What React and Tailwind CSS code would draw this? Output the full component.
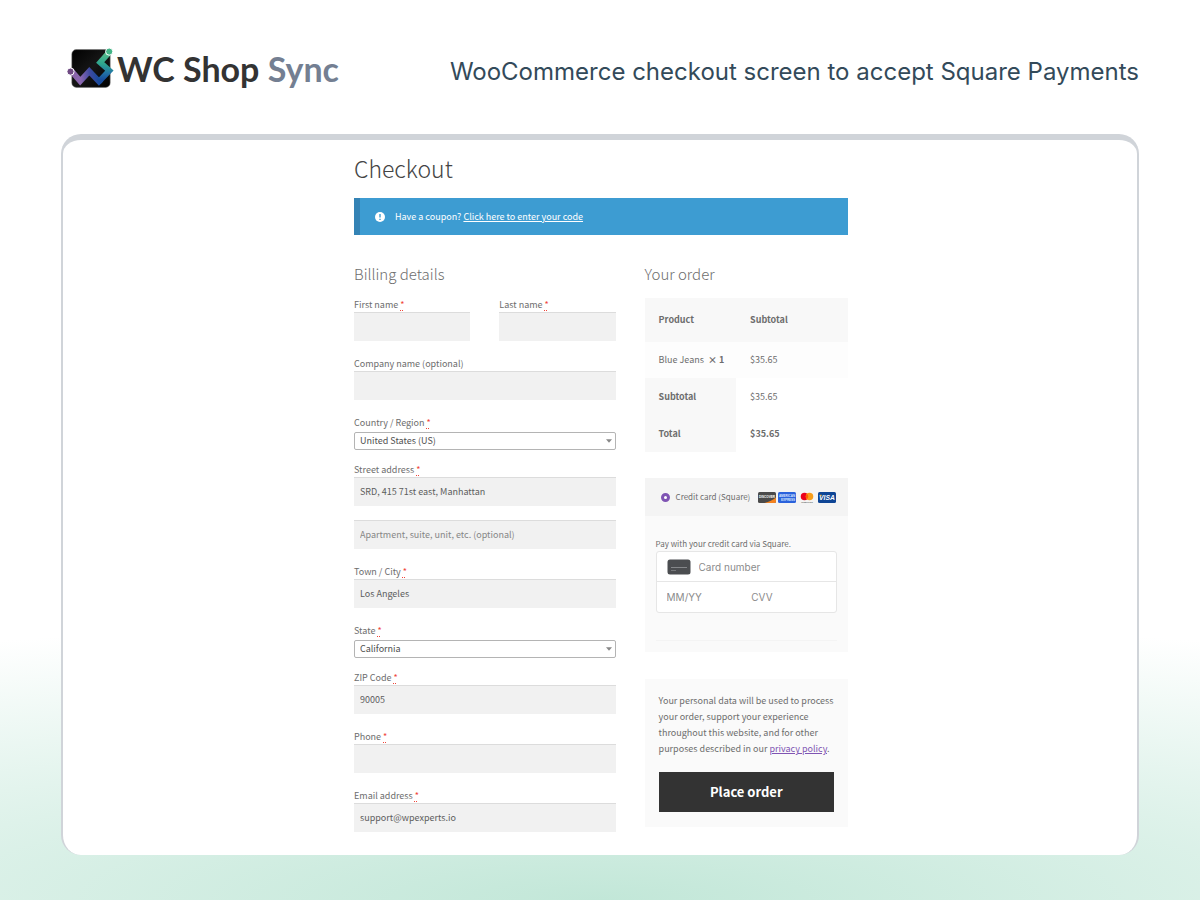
import React from "react";

const inputStyle =
  "block h-[29px] w-full min-w-0 border-t border-[#dcdcdc] bg-[#f1f1f1] px-1.5 pb-0.5 text-[#5d5d5d] outline-none placeholder:text-[#868686]";

function Label({ htmlFor, required, children }) {
  return (
    <label htmlFor={htmlFor} className="block h-4 leading-[17px] whitespace-nowrap">
      {children}
      {required && (
        <abbr
          title="required"
          className="ml-0.5 text-[#f0453a] underline decoration-dotted underline-offset-2"
        >
          *
        </abbr>
      )}
    </label>
  );
}

function Field({ id, label, required, value, type = "text" }) {
  return (
    <div>
      <Label htmlFor={id} required={required}>
        {label}
      </Label>
      <input id={id} type={type} defaultValue={value} className={inputStyle} />
    </div>
  );
}

function SelectField({ id, label, value }) {
  return (
    <div className="-mb-[3px]">
      <Label htmlFor={id} required>
        {label}
      </Label>
      <div className="relative mt-0.5">
        <select
          id={id}
          defaultValue={value}
          className="block h-[18px] w-full appearance-none rounded-[2px] border border-[#b4b4b4] bg-white px-[5px] text-[#4f4f4f] outline-none"
        >
          <option>{value}</option>
        </select>
        <svg
          viewBox="0 0 6 4"
          className="pointer-events-none absolute top-[7px] right-1 h-1 w-1.5"
          aria-hidden="true"
        >
          <path d="M0 .3h6L3 3.7z" fill="#888" />
        </svg>
      </div>
    </div>
  );
}

function LogoMark() {
  return (
    <svg viewBox="0 0 48 44" className="h-11 w-12 shrink-0" aria-hidden="true">
      <defs>
        <linearGradient id="box" x1="0" y1="0" x2="1" y2="1">
          <stop offset="0" stopColor="#000" />
          <stop offset="0.5" stopColor="#161616" />
          <stop offset="1" stopColor="#000" />
        </linearGradient>
        <linearGradient id="wave" gradientUnits="userSpaceOnUse" x1="3" y1="30" x2="43" y2="24">
          <stop offset="0" stopColor="#8a62a5" />
          <stop offset="0.25" stopColor="#8b68b0" />
          <stop offset="0.5" stopColor="#3e4aa0" />
          <stop offset="0.7" stopColor="#174a9c" />
          <stop offset="1" stopColor="#2277a8" />
        </linearGradient>
        <linearGradient id="rise" gradientUnits="userSpaceOnUse" x1="38" y1="5" x2="36" y2="34">
          <stop offset="0" stopColor="#5fc08a" />
          <stop offset="0.45" stopColor="#2da58e" />
          <stop offset="0.75" stopColor="#2273a6" />
          <stop offset="1" stopColor="#174a9c" />
        </linearGradient>
      </defs>
      <rect x="4.8" y="3.6" width="38.4" height="37.8" rx="4.5" fill="url(#box)" stroke="#777" strokeWidth=".5" />
      <path d="M4 24.5L13.2 35.2L22.3 25.3L32 35.5L34 33.5" fill="none" stroke="url(#wave)" strokeWidth="5.8" />
      <path d="M31.5 36L42.4 24.6L33.2 16.4L42.5 6" fill="none" stroke="url(#rise)" strokeWidth="5.8" />
      <circle cx="3.5" cy="25.6" r="3.6" fill="#6f4a83" stroke="#fff" strokeWidth="1" />
      <circle cx="42.2" cy="5.6" r="3.6" fill="#43b487" stroke="#fff" strokeWidth="1" />
    </svg>
  );
}

function Discover() {
  return (
    <svg viewBox="0 0 36 22" className="h-[11px] w-[18px]" role="img" aria-label="Discover">
      <rect width="36" height="22" rx="3" fill="#4a4a4a" />
      <path d="M36 11v8a3 3 0 0 1-3 3H13C22 20 30 16 36 11z" fill="#f58220" />
      <text x="18" y="12" textAnchor="middle" fontFamily="Liberation Sans" fontWeight="700" fontSize="6.2" fill="#fff">
        DISCOVER
      </text>
    </svg>
  );
}

function Amex() {
  return (
    <svg viewBox="0 0 36 22" className="h-[11px] w-[18px]" role="img" aria-label="American Express">
      <rect width="36" height="22" rx="3" fill="#2a62dc" />
      <g fontFamily="Liberation Sans" fontWeight="700" fill="#dbe7ff" textAnchor="middle">
        <text x="18" y="9.5" fontSize="6">AMERICAN</text>
        <text x="20" y="18" fontSize="6">EXPRESS</text>
      </g>
    </svg>
  );
}

function Mastercard() {
  return (
    <svg viewBox="0 0 36 22" className="h-[11px] w-[18px]" role="img" aria-label="Mastercard">
      <circle cx="13" cy="9" r="7.5" fill="#eb001b" />
      <circle cx="23" cy="9" r="7.5" fill="#f79e1b" />
      <path d="M18 3.4a7.5 7.5 0 0 1 0 11.2a7.5 7.5 0 0 1 0-11.2z" fill="#ff5f00" />
      <text x="18" y="21.4" textAnchor="middle" fontFamily="Liberation Sans" fontSize="4.6" fill="#333">
        mastercard
      </text>
    </svg>
  );
}

function Visa() {
  return (
    <svg viewBox="0 0 36 22" className="h-[11px] w-[18px]" role="img" aria-label="Visa">
      <rect width="36" height="22" rx="3" fill="#0e4595" />
      <text x="18" y="16" textAnchor="middle" fontFamily="Liberation Sans" fontWeight="700" fontStyle="italic" fontSize="13.5" fill="#fff">
        VISA
      </text>
      <path d="M3 5.5h4l2 5c-1-2-3-4-6-5z" fill="#f2ae14" />
    </svg>
  );
}

function OrderTable() {
  return (
    <table className="w-full table-fixed border-collapse text-left">
      <thead>
        <tr className="h-11 bg-[#f8f8f8]">
          <th scope="col" className="w-[45%] pl-3.5 font-bold">Product</th>
          <th scope="col" className="pl-3.5 font-bold">Subtotal</th>
        </tr>
      </thead>
      <tbody>
        <tr className="h-9 bg-[#fdfdfd]">
          <td className="pl-3.5 whitespace-nowrap">
            Blue Jeans&nbsp; <strong className="font-bold">×&nbsp;1</strong>
          </td>
          <td className="pl-3.5">$35.65</td>
        </tr>
      </tbody>
      <tfoot>
        <tr className="h-[37px]">
          <th scope="row" className="bg-[#f8f8f8] pl-3.5 font-bold">Subtotal</th>
          <td className="pl-3.5">$35.65</td>
        </tr>
        <tr className="h-[37px]">
          <th scope="row" className="bg-[#f8f8f8] pl-3.5 font-bold">Total</th>
          <td className="pl-3.5 font-bold">$35.65</td>
        </tr>
      </tfoot>
    </table>
  );
}

function Payment() {
  return (
    <section className="mt-[26px] h-[174px] bg-[#fafafa]">
      <div className="flex h-[38px] items-center bg-[#f4f4f4] pr-3 pl-4">
        <input
          id="square"
          type="radio"
          name="method"
          defaultChecked
          className="size-[9px] shrink-0 appearance-none rounded-full border-[3px] border-[#7f54b3] bg-white"
        />
        <label htmlFor="square" className="ml-1.5 text-[8px] whitespace-nowrap">
          Credit card (Square)
        </label>
        <span className="ml-auto flex gap-0.5">
          <Discover />
          <Amex />
          <Mastercard />
          <Visa />
        </span>
      </div>
      <div className="mx-[11px] mt-3 h-[113px] border-b border-[#f4f4f4] pt-2 text-[8px]">
        <p className="h-[15px] leading-[15px] whitespace-nowrap">Pay with your credit card via Square.</p>
        <div className="rounded-[3px] border border-[#e6e6e6] bg-white font-['Inter',sans-serif] text-[10px]">
          <div className="flex h-[30px] items-center border-b border-[#e6e6e6] pl-2.5">
            <svg viewBox="0 0 24 16" className="h-4 w-6 shrink-0" aria-hidden="true">
              <rect x=".5" y=".5" width="23" height="15" rx="2.5" fill="#4b4d50" />
              <path d="M4 8.5h16" stroke="#85878a" strokeWidth="1" />
              <path d="M4 11.5h5" stroke="#76787b" strokeWidth="1" />
            </svg>
            <input
              aria-label="Card number"
              placeholder="Card number"
              className="ml-2 h-6 w-full min-w-0 outline-none placeholder:text-[#8b8b8b]"
            />
          </div>
          <div className="flex h-[30px] items-center pl-2.5">
            <input
              aria-label="Expiration date"
              placeholder="MM/YY"
              className="h-6 w-1/2 min-w-0 outline-none placeholder:text-[#8b8b8b]"
            />
            <input
              aria-label="CVV"
              placeholder="CVV"
              className="h-6 w-1/2 min-w-0 outline-none placeholder:text-[#8b8b8b]"
            />
          </div>
        </div>
      </div>
    </section>
  );
}

export default function App() {
  return (
    <div className="flex min-h-screen flex-col bg-white bg-[radial-gradient(ellipse_133%_280px_at_50%_100%,#c2e7d8,#ffffff)] px-[61px] pb-[45px] font-['Noto_Sans_CJK_SC',sans-serif] text-[9px] text-[#6d6d6d]">
      <header className="flex h-[134px] items-center justify-between pt-0.5 pl-1.5">
        <div className="flex items-center gap-0.5 font-['Lato',sans-serif] text-[34px] font-bold whitespace-nowrap text-[#333]">
          <LogoMark />
          <span>
            WC Shop <span className="text-[#747f92]">Sync</span>
          </span>
        </div>
        <p className="pt-2 font-['Inter',sans-serif] text-2xl whitespace-nowrap text-[#334a5a]">
          WooCommerce checkout screen to accept Square Payments
        </p>
      </header>

      <main className="flex-1 rounded-[20px] border-x-2 border-t-[6px] border-[#d0d4d9] bg-white pb-[22px] pl-0.5">
        <div className="mx-auto max-w-[494px] pt-2.5">
          <h1 className="h-9 text-[23px] leading-9 font-light text-[#444]">Checkout</h1>
          <div className="mt-3 flex h-[37px] items-center border-l-[6px] border-[#3483b5] bg-[#3d9cd2] pl-[15px] text-white">
            <svg viewBox="0 0 10 10" className="size-2.5" aria-hidden="true">
              <circle cx="5" cy="5" r="5" fill="#fff" />
              <path d="M5 2v3.6M5 6.7v1.3" stroke="#3d9cd2" strokeWidth="1.4" />
            </svg>
            <p className="ml-2.5">
              Have a coupon?{" "}
              <a href="#coupon" className="underline">
                Click here to enter your code
              </a>
            </p>
          </div>

          <form className="mt-[27px] grid grid-cols-[9fr_7fr] gap-x-[29px]" onSubmit={(e) => e.preventDefault()}>
            <section>
              <h2 className="mb-2.5 h-6 text-[15px] leading-6 font-light">Billing details</h2>
              <div className="flex flex-col gap-3.5">
                <div className="grid grid-cols-2 gap-[29px]">
                  <Field id="first" label="First name" required />
                  <Field id="last" label="Last name" required />
                </div>
                <Field id="company" label="Company name (optional)" />
                <SelectField id="country" label="Country / Region" value="United States (US)" />
                <div>
                  <Field id="street" label="Street address" required value="SRD, 415 71st east, Manhattan" />
                  <input
                    aria-label="Apartment, suite, unit, etc. (optional)"
                    placeholder="Apartment, suite, unit, etc. (optional)"
                    className={inputStyle + " mt-3.5"}
                  />
                </div>
                <Field id="city" label="Town / City" required value="Los Angeles" />
                <SelectField id="state" label="State" value="California" />
                <Field id="zip" label="ZIP Code" required value="90005" />
                <Field id="phone" label="Phone" required type="tel" />
                <Field id="email" label="Email address" required type="email" value="support@wpexperts.io" />
              </div>
            </section>

            <section>
              <h2 className="mb-3 h-6 text-[15px] leading-6 font-light">Your order</h2>
              <OrderTable />
              <Payment />
              <div className="mt-[27px] bg-[#fafafa] px-3.5 pt-3.5 pb-[15px]">
                <p className="leading-4">
                  Your personal data will be used to process your order, support your experience throughout this
                  website, and for other purposes described in our{" "}
                  <a href="#privacy" className="text-[#7f54b3] underline">
                    privacy policy
                  </a>
                  .
                </p>
                <button type="submit" className="mt-[15px] h-10 w-full bg-[#333] text-[13px] font-bold text-white">
                  Place order
                </button>
              </div>
            </section>
          </form>
        </div>
      </main>
    </div>
  );
}
